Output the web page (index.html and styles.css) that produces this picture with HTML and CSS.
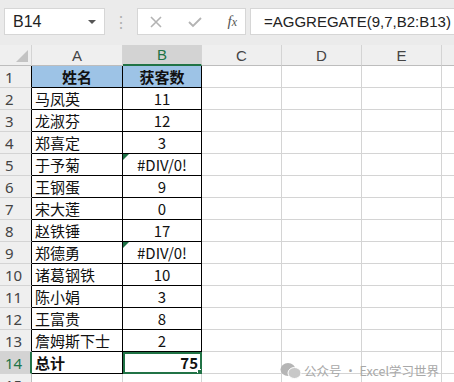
FILE: index.html
```html
<!DOCTYPE html>
<html lang="zh-CN">
<head>
    <meta charset="UTF-8">
    <title>AGGREGATE</title>
    <link rel="stylesheet" href="styles.css">
</head>
<body>
    <div class="toolbar">
        <div class="namebox">
            <span>B14</span>
            <span class="caret"></span>
        </div>
        <div class="dots">⋮</div>
        <div class="fx-buttons">
            <svg width="14" height="14" viewBox="0 0 14 14"><path d="M2 2 L12 12 M12 2 L2 12" stroke="#b3b3b3" stroke-width="1.6" fill="none"/></svg>
            <svg width="16" height="14" viewBox="0 0 16 14"><path d="M2 7 L6 11 L14 3" stroke="#b3b3b3" stroke-width="1.8" fill="none"/></svg>
            <span class="fx"><i>f</i><i>x</i></span>
        </div>
        <div class="formula">=AGGREGATE(9,7,B2:B13)</div>
    </div>

    <table class="sheet">
        <colgroup>
            <col class="c-head">
            <col class="c-a">
            <col class="c-b">
            <col class="c-n">
            <col class="c-n">
            <col class="c-n">
            <col>
        </colgroup>
        <tr class="colhead">
            <th class="corner"></th>
            <th>A</th>
            <th class="on">B</th>
            <th>C</th>
            <th>D</th>
            <th>E</th>
            <th></th>
        </tr>
        <tr>
            <th class="rh">1</th>
            <td class="d title">姓名</td>
            <td class="d title">获客数</td>
            <td></td><td></td><td></td><td></td>
        </tr>
        <tr><th class="rh">2</th><td class="d">马凤英</td><td class="d num">11</td><td></td><td></td><td></td><td></td></tr>
        <tr><th class="rh">3</th><td class="d">龙淑芬</td><td class="d num">12</td><td></td><td></td><td></td><td></td></tr>
        <tr><th class="rh">4</th><td class="d">郑喜定</td><td class="d num">3</td><td></td><td></td><td></td><td></td></tr>
        <tr><th class="rh">5</th><td class="d">于予菊</td><td class="d num err">#DIV/0!</td><td></td><td></td><td></td><td></td></tr>
        <tr><th class="rh">6</th><td class="d">王钢蛋</td><td class="d num">9</td><td></td><td></td><td></td><td></td></tr>
        <tr><th class="rh">7</th><td class="d">宋大莲</td><td class="d num">0</td><td></td><td></td><td></td><td></td></tr>
        <tr><th class="rh">8</th><td class="d">赵铁锤</td><td class="d num">17</td><td></td><td></td><td></td><td></td></tr>
        <tr><th class="rh">9</th><td class="d">郑德勇</td><td class="d num err">#DIV/0!</td><td></td><td></td><td></td><td></td></tr>
        <tr><th class="rh">10</th><td class="d">诸葛钢铁</td><td class="d num">10</td><td></td><td></td><td></td><td></td></tr>
        <tr><th class="rh">11</th><td class="d">陈小娟</td><td class="d num">3</td><td></td><td></td><td></td><td></td></tr>
        <tr><th class="rh">12</th><td class="d">王富贵</td><td class="d num">8</td><td></td><td></td><td></td><td></td></tr>
        <tr><th class="rh">13</th><td class="d">詹姆斯下士</td><td class="d num">2</td><td></td><td></td><td></td><td></td></tr>
        <tr>
            <th class="rh on">14</th>
            <td class="d total">总计</td>
            <td class="d total sel">75</td>
            <td></td><td></td><td></td><td></td>
        </tr>
        <tr><th class="rh last">15</th><td></td><td></td><td></td><td></td><td></td><td></td></tr>
    </table>

    <div class="watermark">
        <svg width="22" height="18" viewBox="0 0 22 18">
            <ellipse cx="8" cy="7.5" rx="7.5" ry="6.5" fill="#b5b5b5"/>
            <ellipse cx="14.5" cy="11" rx="6.5" ry="5.5" fill="#c8c8c8" stroke="#fff" stroke-width="1"/>
        </svg>
        <span>公众号 · Excel学习世界</span>
    </div>
</body>
</html>
```

FILE: styles.css
```css
body {
    margin: 0;
    width: 454px;
    height: 382px;
    overflow: hidden;
    background-color: #ffffff;
    font-family: "Noto Sans CJK SC", "Noto Sans", sans-serif;
    position: relative;
}

/* formula bar */
.toolbar {
    height: 45px;
    background-color: #ebebeb;
    display: flex;
    align-items: flex-start;
    padding: 8px 0 0 4px;
    box-sizing: border-box;
}

.toolbar > * {
    flex-shrink: 0;
}

.namebox {
    width: 101px;
    height: 27px;
    box-sizing: border-box;
    background-color: #ffffff;
    border: 1px solid #d6d6d6;
    display: flex;
    align-items: center;
    justify-content: space-between;
    padding: 0 8px 0 8px;
    font-family: "Liberation Sans", Arial, sans-serif;
    font-size: 16px;
    color: #222;
}

.caret {
    width: 0;
    height: 0;
    border-left: 4px solid transparent;
    border-right: 4px solid transparent;
    border-top: 4px solid #555;
}

.dots {
    width: 32px;
    text-align: center;
    color: #b0b0b0;
    font-size: 16px;
    line-height: 27px;
}

.fx-buttons {
    width: 109px;
    height: 27px;
    box-sizing: border-box;
    background-color: #ffffff;
    border: 1px solid #d6d6d6;
    display: flex;
    align-items: center;
    justify-content: space-between;
    padding: 0 8px 0 11px;
}

.fx {
    font-family: "Liberation Serif", serif;
    font-size: 15px;
    color: #555;
}

.fx i:last-child {
    font-size: 12px;
}

.formula {
    flex: 1 1 auto !important;
    min-width: 0;
    margin-left: 4px;
    height: 27px;
    box-sizing: border-box;
    background-color: #ffffff;
    border: 1px solid #d6d6d6;
    border-right: none;
    padding-left: 13px;
    font-family: "Liberation Sans", Arial, sans-serif;
    font-size: 15px;
    line-height: 25px;
    color: #222;
    white-space: nowrap;
    overflow: hidden;
}

/* grid */
.sheet {
    border-collapse: separate;
    border-spacing: 0;
    table-layout: fixed;
    width: 470px;
}

.c-head { width: 32px; }
.c-a { width: 91px; }
.c-b { width: 79px; }
.c-n { width: 80px; }

.sheet th,
.sheet td {
    padding: 0;
    border-right: 1px solid #d4d4d4;
    border-bottom: 1px solid #d4d4d4;
    height: 21px;
    font-weight: normal;
    white-space: nowrap;
    overflow: hidden;
}

.colhead th {
    height: 19px;
    background-color: #efefef;
    color: #444;
    font-family: "Liberation Sans", Arial, sans-serif;
    font-size: 15px;
    border-bottom-color: #bdbdbd;
}

.colhead th.on {
    background-color: #d3d3d3;
    color: #217346;
    border-bottom: 2px solid #217346;
}

.corner {
    position: relative;
}

.corner::after {
    content: "";
    position: absolute;
    right: 3px;
    bottom: 3px;
    border-left: 12px solid transparent;
    border-bottom: 12px solid #c3c3c3;
}

.rh {
    background-color: #efefef;
    color: #444;
    font-family: "Noto Sans", sans-serif;
    font-size: 15px;
    text-align: left;
    padding-left: 5px !important;
}

.rh.on {
    background-color: #d3d3d3;
    color: #217346;
    border-right: 2px solid #217346;
}

.sheet td.d {
    border-right-color: #000;
    border-bottom-color: #000;
    font-size: 15px;
    color: #111;
    padding-left: 3px;
}

.sheet th.rh {
    border-right-color: #000;
}

.sheet th.rh.last {
    border-right-color: #bdbdbd;
}

.sheet th.rh.on {
    border-right-color: #217346;
}

.sheet td.title {
    background-color: #9dc3e6;
    font-weight: bold;
    text-align: center;
    padding-left: 0;
}

.sheet td.num {
    text-align: center;
    padding-left: 0;
}

.err {
    position: relative;
}

.err::before {
    content: "";
    position: absolute;
    left: 0;
    top: 0;
    border-top: 6px solid #1e7145;
    border-right: 6px solid transparent;
}

.sheet td.total {
    font-weight: bold;
}

.sheet td.sel {
    position: relative;
    text-align: right;
    padding-right: 3px;
    outline: 2px solid #217346;
    outline-offset: -2px;
}

.sel::after {
    content: "";
    position: absolute;
    right: -3px;
    bottom: -3px;
    width: 5px;
    height: 5px;
    background-color: #217346;
    border: 1px solid #ffffff;
}

.watermark {
    position: absolute;
    left: 280px;
    top: 361px;
    display: flex;
    align-items: center;
    gap: 2px;
    color: #a8a8a8;
    font-size: 12.5px;
}
```
